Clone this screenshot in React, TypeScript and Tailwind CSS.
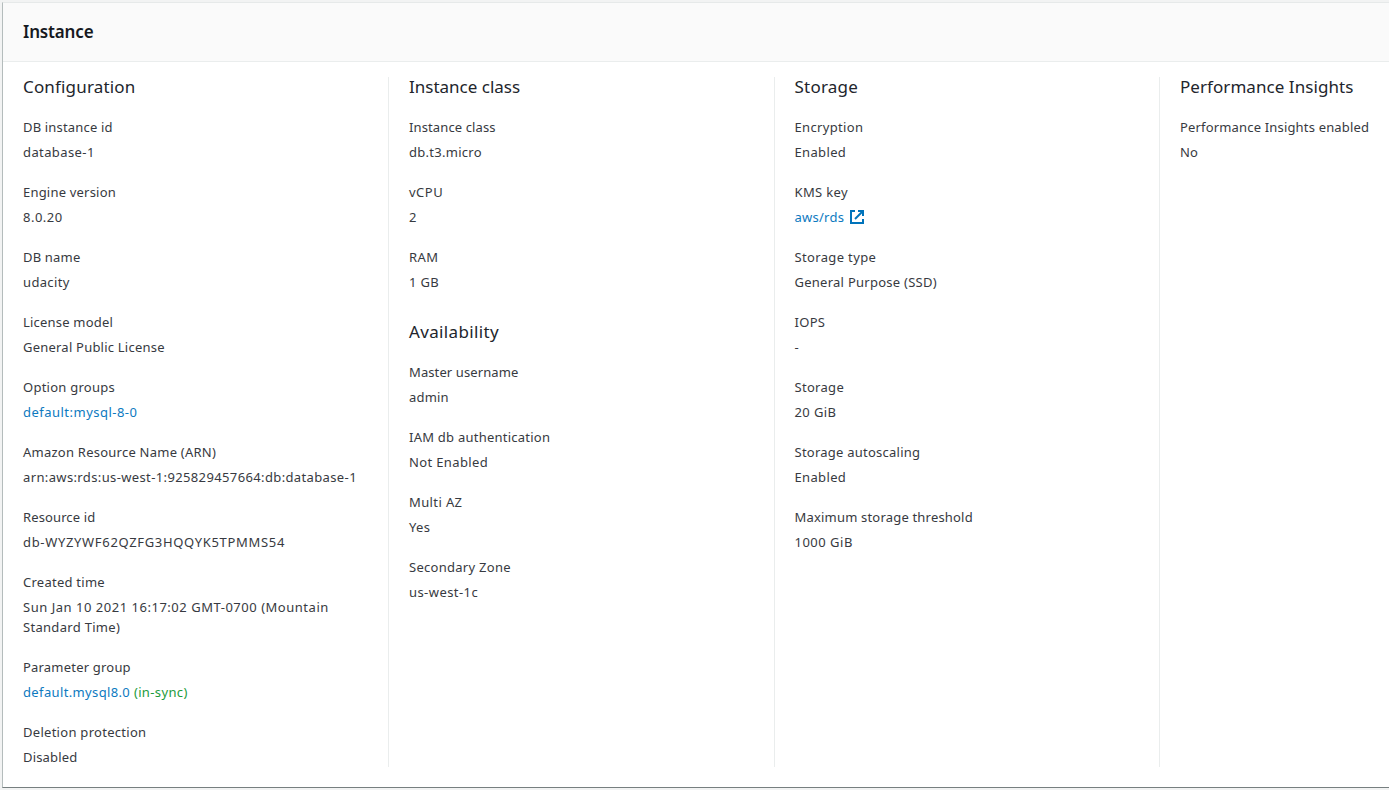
import type { ReactNode } from 'react';

function ExternalIcon() {
  return (
    <svg width="14" height="14" viewBox="0 0 14 14" fill="none" stroke="#0073bb" strokeWidth="2" className="ml-[6px] shrink-0">
      <path d="M5 1H1v12h12V9" />
      <path d="M8 1h5v5" />
      <path d="M13 1L5 9" />
    </svg>
  );
}

function Link({ children }: { children: ReactNode }) {
  return <a className="text-[#0d7abf]">{children}</a>;
}

function Section({ title, track = '', children }: { title: string; track?: string; children: ReactNode }) {
  return (
    <section className="flex flex-col gap-5">
      <h3 className={`text-[17px] leading-5 text-[#22252c] ${track}`}>{title}</h3>
      {children}
    </section>
  );
}

type FieldProps = { label: string; track?: string; vtrack?: string; children: ReactNode };

function Field({ label, track = '', vtrack = '', children }: FieldProps) {
  return (
    <div className="flex flex-col gap-[5px] leading-5">
      <div className={track}>{label}</div>
      <div className={vtrack}>{children}</div>
    </div>
  );
}

function Column({ children }: { children: ReactNode }) {
  return (
    <div className="flex w-[385.5px] shrink-0 flex-col gap-[30px] border-l border-[#eaeded] pr-5 pl-5 whitespace-nowrap first:w-[385px] first:border-l-0">
      {children}
    </div>
  );
}

export default function App() {
  return (
    <div className="h-[790px] w-[1389px] overflow-hidden bg-[#f2f3f3] pt-[2px] pl-[2px] font-['Noto_Sans',sans-serif] text-[13px] text-[#373a41]">
      <div className="h-[786px] border-t border-b border-l border-t-[#e6e9e9] border-b-[#777f80] border-l-[#b4bcbc] bg-white">
        <header className="flex h-[59px] items-center border-b border-[#eaeded] bg-[#fafafa] pl-5">
          <h2 className="text-[17px] leading-5 font-semibold tracking-[-0.15px] text-[#16191f]">Instance</h2>
        </header>
        <main className="flex h-[705px] pt-[15px]">
          <Column>
            <Section title="Configuration" track="tracking-[0.17px]">
              <Field label="DB instance id" track="tracking-[0.17px]" vtrack="tracking-[0.4px]">database-1</Field>
              <Field label="Engine version" track="tracking-[0.2px]" vtrack="tracking-[0.5px]">8.0.20</Field>
              <Field label="DB name" track="tracking-[0.18px]" vtrack="tracking-[0.35px]">udacity</Field>
              <Field label="License model" track="tracking-[0.2px]" vtrack="tracking-[0.22px]">General Public License</Field>
              <Field label="Option groups" track="tracking-[0.25px]" vtrack="tracking-[0.48px]"><Link>default:mysql-8-0</Link></Field>
              <Field label="Amazon Resource Name (ARN)" track="tracking-[0.24px]" vtrack="tracking-[0.37px]">arn:aws:rds:us-west-1:925829457664:db:database-1</Field>
              <Field label="Resource id" track="tracking-[0.12px]" vtrack="tracking-[0.67px]">db-WYZYWF62QZFG3HQQYK5TPMMS54</Field>
              <Field label="Created time" track="tracking-[0.25px]" vtrack="tracking-[0.52px]">
                Sun Jan 10 2021 16:17:02 GMT-0700 (Mountain<br />
                <span className="tracking-[0.3px]">Standard Time)</span>
              </Field>
              <Field label="Parameter group" track="tracking-[0.2px]" vtrack="tracking-[0.36px]">
                <Link>default.mysql8.0</Link> <span className="text-[#1d9b3c]">(in-sync)</span>
              </Field>
              <Field label="Deletion protection" track="tracking-[0.28px]" vtrack="tracking-[0.17px]">Disabled</Field>
            </Section>
          </Column>
          <Column>
            <Section title="Instance class">
              <Field label="Instance class" track="tracking-[0.12px]" vtrack="tracking-[0.28px]">db.t3.micro</Field>
              <Field label="vCPU" track="tracking-[0.5px]">2</Field>
              <Field label="RAM" track="tracking-[0.4px]" vtrack="tracking-[0.35px]">1 GB</Field>
            </Section>
            <Section title="Availability" track="tracking-[0.35px]">
              <Field label="Master username" track="tracking-[0.1px]" vtrack="tracking-[0.2px]">admin</Field>
              <Field label="IAM db authentication" track="tracking-[0.24px]" vtrack="tracking-[0.36px]">Not Enabled</Field>
              <Field label="Multi AZ" track="tracking-[0.38px]" vtrack="tracking-[0.3px]">Yes</Field>
              <Field label="Secondary Zone" track="tracking-[0.28px]" vtrack="tracking-[0.43px]">us-west-1c</Field>
            </Section>
          </Column>
          <Column>
            <Section title="Storage" track="tracking-[0.22px]">
              <Field label="Encryption" track="tracking-[0.33px]" vtrack="tracking-[0.35px]">Enabled</Field>
              <Field label="KMS key" track="tracking-[0.35px]" vtrack="flex items-center tracking-[0.25px]"><Link>aws/rds</Link><ExternalIcon /></Field>
              <Field label="Storage type" track="tracking-[0.35px]" vtrack="tracking-[0.26px]">General Purpose (SSD)</Field>
              <Field label="IOPS" track="tracking-[0.3px]">-</Field>
              <Field label="Storage" track="tracking-[0.3px]" vtrack="tracking-[0.4px]">20 GiB</Field>
              <Field label="Storage autoscaling" track="tracking-[0.24px]" vtrack="tracking-[0.35px]">Enabled</Field>
              <Field label="Maximum storage threshold" track="tracking-[0.19px]" vtrack="tracking-[0.5px]">1000 GiB</Field>
            </Section>
          </Column>
          <Column>
            <Section title="Performance Insights" track="tracking-[0.06px]">
              <Field label="Performance Insights enabled" track="tracking-[0.17px]">No</Field>
            </Section>
          </Column>
        </main>
      </div>
    </div>
  );
}
